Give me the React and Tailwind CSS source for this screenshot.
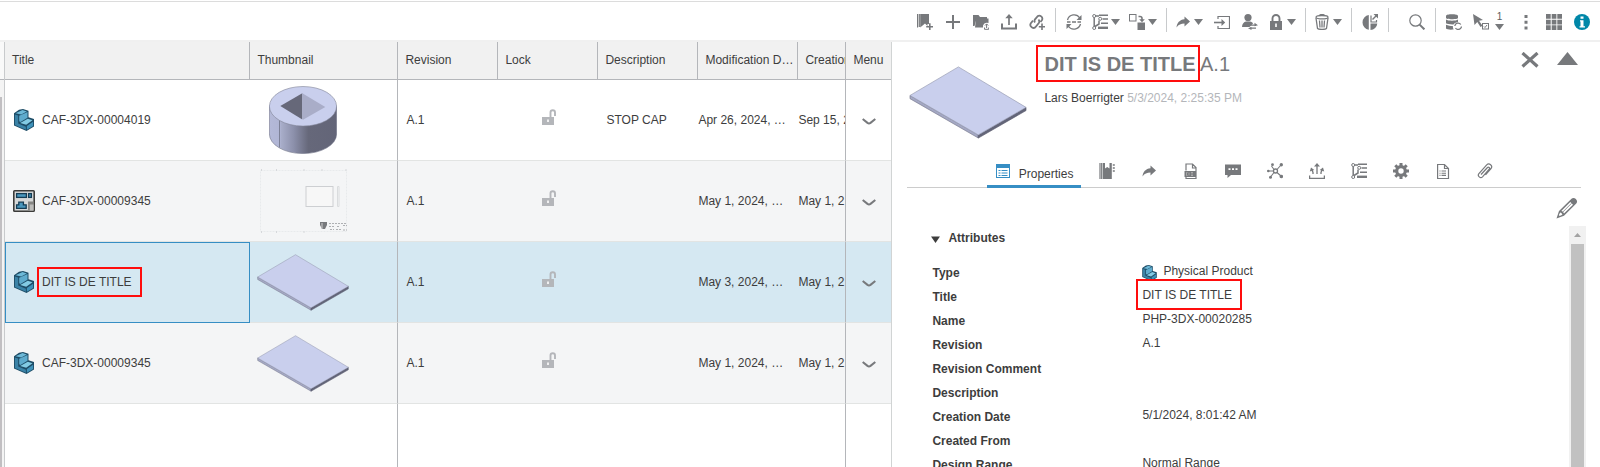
import React from "react";

const G = "#77797c";

function Svg({ children, className = "size-4", box = "0 0 16 16" }) {
  return (
    <svg viewBox={box} className={className} fill="none" stroke={G} aria-hidden="true">
      {children}
    </svg>
  );
}

/* ---------- toolbar icons ---------- */

const BookmarkAdd = () => (
  <Svg>
    <path d="M.5 0v13.500M2.300 0v13" strokeWidth="1.200" />
    <path d="M3.200 0H12v10h-1.500v2L8 9.500 3.200 13.500z" fill={G} stroke="none" />
    <path d="M12.800 9.300V16M9.200 12.800H16" strokeWidth="1.600" />
  </Svg>
);
const Plus = () => (
  <Svg>
    <path d="M8 1v14M1 8h14" strokeWidth="2" />
  </Svg>
);
const FolderUp = () => (
  <Svg>
    <path d="M0 1h5.500l1.500 2H14v2H3.500L1.500 12H0z" fill={G} stroke="none" />
    <path d="M3 4.500h12.500V9a4 4 0 0 0-5.500 4.500H2z" fill={G} stroke="none" />
    <path d="M11.500 13.500v1.800h4.200v-1.800M13.600 14v-4M12 11.500l1.600-1.600 1.600 1.600" strokeWidth="1" />
  </Svg>
);
const Upload = () => (
  <Svg>
    <path d="M1 9.500v5h14v-5" strokeWidth="2" />
    <path d="M8 11V2" strokeWidth="1.700" />
    <path d="M8 0l3.700 4.300H4.300z" fill={G} stroke="none" />
  </Svg>
);
const LinkAdd = () => (
  <Svg>
    <path d="M6 8.500a3 3 0 0 1 0-3.200l2.500-3a3 3 0 0 1 4.500 3.700l-1.500 2" strokeWidth="1.800" />
    <path d="M9.500 5.500a3 3 0 0 1 .3 3.500l-2.800 3.500a3 3 0 0 1-5-3.500l2-2.300" strokeWidth="1.800" />
    <path d="M13 9.500V16M9.800 12.800H16" strokeWidth="1.600" />
  </Svg>
);
const Refresh = () => (
  <Svg>
    <path d="M1.500 6A6.800 6.800 0 0 1 13.800 4M14.500 10A6.800 6.800 0 0 1 2.200 12" strokeWidth="1.300" />
    <path d="M15.500 1v5h-5zM.5 15v-5h5z" fill={G} stroke="none" />
    <path d="M1 8h3.500M6 8h4M11.500 8H15" strokeWidth="1.700" />
  </Svg>
);
const TreeList = () => (
  <Svg>
    <circle cx="2.200" cy="2" r="1.500" />
    <circle cx="2.200" cy="14" r="1.500" />
    <circle cx="8.200" cy="4.800" r="1.500" />
    <path d="M2.200 3.500v9M3 12.500l4-2.500V6.500M4 2h3" strokeWidth="1.500" />
    <path d="M7 1.300h9M10.500 5H16M9 9.300h7" strokeWidth="1.600" />
    <path d="M6 13.800h10" strokeWidth="2.400" />
  </Svg>
);
const CopyTo = () => (
  <Svg>
    <rect x=".5" y=".5" width="6.500" height="6.500" />
    <path d="M8.500 8.500H16V16H8.500z" fill={G} stroke="none" />
    <path d="M9.500 2.500h1.500a2 2 0 0 1 2 2V6" strokeWidth="1.600" />
    <path d="M10.200 5.200h5.600L13 8.300z" fill={G} stroke="none" />
  </Svg>
);
const Share = () => (
  <Svg>
    <path d="M9.500 2.500l5.500 5-5.500 5V9.500C6 9.500 3.500 10.500 1.500 13.500 2 9 4.500 5.800 9.500 5.300z" fill={G} stroke="none" />
  </Svg>
);
const Enter = () => (
  <Svg>
    <path d="M4 5V2.500h11.500v12H4V12" strokeWidth="1.200" />
    <path d="M0 8.500h9" strokeWidth="1.600" />
    <path d="M7.500 5l3.700 3.500L7.500 12z" fill={G} stroke="none" />
  </Svg>
);
const UserSwap = () => (
  <Svg>
    <circle cx="6" cy="3.600" r="3.600" fill={G} stroke="none" />
    <path d="M0 13c0-3.500 2-5 4-5.500h4c1.500.3 2.500 1 3 2L7.500 13z" fill={G} stroke="none" />
    <path d="M8 11.200h6M8 14.200h6" strokeWidth="1.300" />
    <path d="M12.500 8.800L16 11.200l-3.500 1zM9.500 13L6 14.200 9.500 16z" fill={G} stroke="none" />
  </Svg>
);
const Lock = () => (
  <Svg>
    <path d="M4.500 7V4.500a3.500 3.500 0 0 1 7 0V7" strokeWidth="1.900" />
    <path d="M2 7h12v9H2z" fill={G} stroke="none" />
    <path d="M8 9.500v3.500" stroke="#fff" strokeWidth="1.600" />
  </Svg>
);
const Trash = () => (
  <Svg>
    <ellipse cx="8" cy="3.200" rx="6" ry="1.700" strokeWidth="1.300" />
    <path d="M5.500 1.700c0-1.600 5-1.600 5 0" strokeWidth="1.200" />
    <path d="M2 4l1.500 10.500c1.500 1.200 7.500 1.200 9 0L14 4M5.500 6.500l.5 7M8 6.500v7M10.500 6.500l-.5 7" strokeWidth="1.300" />
  </Svg>
);
const PieOut = () => (
  <Svg>
    <path d="M6.800 1v14.800A7.500 7.500 0 0 1 6.800 1zM8.500 9.500h6.800A7 7 0 0 1 8.500 16z" fill={G} stroke="none" />
    <path d="M9 1.500V8h5.500V6" strokeWidth="1.200" />
    <path d="M10.500 5.500l4-4" strokeWidth="1.400" />
    <path d="M11.500 0H16v4.500z" fill={G} stroke="none" />
  </Svg>
);
const Search = () => (
  <Svg>
    <circle cx="6.500" cy="6.500" r="5.700" strokeWidth="1.200" />
    <path d="M10.600 10.600l4.800 4.800" strokeWidth="2" />
  </Svg>
);
const DbSync = () => (
  <Svg>
    <path d="M0 1.800C0-.3 12 -.3 12 1.800V4C12 5.600 0 5.600 0 4zM0 5.500c2 1.600 10 1.600 12 0V8c-2.500.3-4 1.500-4.500 2.500C4 10.600 1 10 0 9.300zM0 10.800c2 1 4.500 1.200 6.800 1.200 0 1.300.2 2.300.8 3.500C4 15.900 1 15.500 0 14.500z" fill={G} stroke="none" />
    <path d="M8.800 12a3.300 3.300 0 0 1 6-1.500M15.500 12.500a3.300 3.300 0 0 1-6 1.500" strokeWidth="1.300" />
  </Svg>
);
const PointerBox = () => (
  <Svg>
    <path d="M0 0l10 6-4 .8 3.500 5-2 1.200-3.200-5L1.500 11z" fill={G} stroke="none" />
    <rect x="9.500" y="9.500" width="6" height="5.500" />
    <path d="M11 12.500l1 1 2-2.500" />
  </Svg>
);
const Dots = () => (
  <Svg>
    <path d="M6.500 1h3v3h-3zM6.500 6.700h3v3h-3zM6.500 12.400h3v3h-3z" fill={G} stroke="none" />
  </Svg>
);
const GridIcon = () => (
  <Svg>
    <path d="M0 0h4.700v4.700H0zM5.700 0h4.700v4.700H5.700zM11.300 0H16v4.700h-4.700zM0 5.700h4.700v4.700H0zM5.700 5.700h4.700v4.700H5.700zM11.300 5.700H16v4.700h-4.700zM0 11.300h4.700V16H0zM5.700 11.300h4.700V16H5.700zM11.300 11.300H16V16h-4.700z" fill={G} stroke="none" />
  </Svg>
);
const Info = () => (
  <Svg>
    <circle cx="8" cy="8" r="8" fill="#0087a8" stroke="none" />
    <path d="M6.500 2.500h3v2.300h-3zM6 6.200h3.500v6H11v1.300H5.500v-1.300h1V7.500H6z" fill="#fff" stroke="none" />
  </Svg>
);
const Caret = () => (
  <svg viewBox="0 0 9 6" className="h-1.5 w-[9px]" aria-hidden="true">
    <path d="M0 0h9L4.500 6z" fill={G} />
  </svg>
);

/* ---------- tab icons ---------- */

const FormIcon = () => (
  <Svg className="size-3.5" box="0 0 14 14">
    <rect x=".5" y=".5" width="13" height="13" stroke="#368ec4" fill="#fff" />
    <path d="M0 0h14v4H0z" fill="#368ec4" stroke="none" />
    <path d="M2.500 6.500h2M5.500 6.500h6M2.500 9h2M5.500 9h6M2.500 11.500h2M5.500 11.500h6" stroke="#368ec4" />
  </Svg>
);
const Book = () => (
  <Svg>
    <path d="M1 0v16M2.700 0v16" strokeWidth="1.200" />
    <path d="M3.800 0H6v5.500L8.200 4l2.300 1.500V0h2.300v16h-9z" fill={G} stroke="none" />
    <path d="M13.800 2h2M13.800 5h2M13.800 8h2" strokeWidth="1.500" />
  </Svg>
);
const DocTag = () => (
  <Svg>
    <path d="M3 7.500V1h6.500L13 4.500v11H3v-1.500M9.500 1v4H13" strokeWidth="1.200" />
    <path d="M1.500 8H13v6H1.500z" fill={G} stroke="none" />
    <path d="M4.500 9.500H3.500v3h1M6 9.500v3M8 9.500h2M8 11h2M8 12.500h2" stroke="#bbb" strokeWidth=".7" />
  </Svg>
);
const Comment = () => (
  <Svg>
    <path d="M0 1.500h16V12H6l-3.500 3V12H0z" fill={G} stroke="none" />
    <path d="M3.500 6.200h2M7 6.200h2M10.500 6.200h2" stroke="#fff" strokeWidth="1.700" />
  </Svg>
);
const Network = () => (
  <Svg>
    <circle cx="8.500" cy="8" r="2" strokeWidth="1.300" />
    <path d="M7 6.500L4.500 3M10 6.500L14 2M10 9.500l4 3.500M7 9.500L3.500 14M6 8H2" strokeWidth="1.100" />
    <g fill={G} stroke="none">
      <circle cx="5.500" cy="1.700" r="1.400" />
      <circle cx="14.300" cy="1.700" r="1.700" />
      <circle cx="14.300" cy="13.500" r="1.800" />
      <circle cx="3.500" cy="14.300" r="1.500" />
      <circle cx="1.300" cy="8" r="1.300" />
    </g>
  </Svg>
);
const Export = () => (
  <Svg>
    <path d="M.6 12.500v2.800h14.800v-2.800M8 11V3M4 11V9.500L3 7M12 11V9.500L13 7" strokeWidth="1.300" />
    <path d="M8 0l3 3.500H5zM.8 8.500L2 4.500 5.300 7zM15.200 8.500L14 4.500 10.700 7z" fill={G} stroke="none" />
  </Svg>
);
const Gear = () => (
  <Svg>
    <circle cx="8" cy="8" r="4.300" strokeWidth="3.200" />
    <path d="M8 0v3M8 13v3M0 8h3M13 8h3M2.300 2.300l2.200 2.200M11.500 11.500l2.200 2.200M2.300 13.700l2.200-2.200M11.500 4.500l2.200-2.200" strokeWidth="3" />
  </Svg>
);
const DocLines = () => (
  <Svg>
    <path d="M2.600 1.500h6.900l4 4v10H2.600zM9.500 1.500v4h4" strokeWidth="1.200" />
    <path d="M4.500 8h1M6.500 8H11M4.500 10.200h1M6.500 10.200H11M4.500 12.400h1M6.500 12.400H11" strokeWidth="1.100" />
  </Svg>
);
const Clip = () => (
  <Svg>
    <path d="M4 11.500l6.500-7c1-1 2.800.3 1.700 1.700L5.500 13.800c-2 2-5.500-.8-3.600-3.200l7.800-8.700c2.500-2.500 6.500 1 4.300 3.600l-5.500 6.300" strokeWidth="1.200" />
  </Svg>
);

/* ---------- content drawings ---------- */

function PartIcon({ className = "h-[22px] w-5" }) {
  return (
    <svg viewBox="0 0 20 22" className={`${className} shrink-0`} aria-hidden="true">
      <path d="M0 4.200L5 .8 9 0l5.500 1.800v6.400L20 10v7.500L12.500 22 0 16.500z" fill="#1d4c66" />
      <path d="M1.500 4.300L8.500 1l4.300 1.500-5.600 3z" fill="#6db9d8" />
      <path d="M.9 5.400l3.300 1.200v7.900l7.700 3.300v3L.9 15.900z" fill="#3a82a6" />
      <path d="M5.200 6.800l8.300-3.900v5.800L6.500 13l-1.300-.7z" fill="#5eabcd" />
      <path d="M6.200 14l7.500-4.300 4.800 1.500-6.300 4.500z" fill="#83cbe4" />
      <path d="M12.900 17l6.200-4.300V17l-6.200 3.800z" fill="#3f92ba" />
    </svg>
  );
}
function DrawingIcon() {
  return (
    <svg viewBox="0 0 22 22" className="size-[22px] shrink-0" aria-hidden="true">
      <rect x=".8" y=".8" width="20.400" height="20.400" rx=".8" fill="#d6d8d8" stroke="#3b3b39" strokeWidth="1.600" />
      <rect x="3.600" y="3.600" width="9.800" height="3.800" fill="#4a97bd" stroke="#143c54" strokeWidth="1.300" />
      <rect x="15.600" y="3.600" width="2.800" height="3.800" fill="#4a97bd" stroke="#143c54" strokeWidth="1.300" />
      <path d="M3.600 18.400v-3.600h2.200v-2.600h4.600v2.600h2.800v3.600z" fill="#4a97bd" stroke="#143c54" strokeWidth="1.300" />
      <path d="M15 11.500h5.500v9H15z" fill="#858583" />
      <path d="M16.800 14.500h3.700v6h-3.700z" fill="#bcbcba" />
    </svg>
  );
}
function Plate({ className = "h-[57px] w-[92px]" }) {
  return (
    <svg viewBox="0 0 92 57" className={className} aria-hidden="true">
      <path d="M.7 23L54 53.800v2.400L.7 25.500z" fill="#a4a8c4" stroke="#77798c" strokeWidth=".5" />
      <path d="M91.300 32.300v2.500L54 56.300v-2.500z" fill="#636579" stroke="#55576a" strokeWidth=".5" />
      <path d="M38.500.7l52.800 31.600L54 53.800.7 23z" fill="#c9cfed" stroke="#9297ad" strokeWidth=".5" />
    </svg>
  );
}
function Ring() {
  return (
    <svg viewBox="0 0 68 68" className="ml-3 size-[68px]" aria-hidden="true">
      <defs>
        <linearGradient id="ringSide" x1="0" x2="1" y1="0" y2="0">
          <stop offset="0" stopColor="#b4b9d8" />
          <stop offset=".16" stopColor="#b0b5d4" />
          <stop offset=".17" stopColor="#a9aeca" />
          <stop offset=".36" stopColor="#8c90ab" />
          <stop offset=".58" stopColor="#66687a" />
          <stop offset="1" stopColor="#636578" />
        </linearGradient>
      </defs>
      <path d="M.4 20v28a33.600 19.600 0 0 0 67.200 0V20z" fill="url(#ringSide)" stroke="#6f7286" strokeWidth=".6" />
      <path d="M10.500 34v27.500" stroke="#6f7286" strokeWidth=".8" />
      <ellipse cx="34" cy="20.300" rx="33.600" ry="19.800" fill="#c9cfed" stroke="#7f8396" strokeWidth=".6" />
      <path d="M11.300 20L33.300 7.300V33.500z" fill="#666879" />
      <path d="M33.300 7.300l23 13.700L34 33.700z" fill="#a9adc8" />
    </svg>
  );
}
function Sheet() {
  return (
    <svg viewBox="0 0 90 64" className="ml-0.5 h-16 w-[90px]" fill="none" aria-hidden="true">
      <rect x="1.500" y="1.500" width="86" height="61" stroke="#e8eaec" strokeDasharray="2 1" />
      <path d="M2.500 0v2M17.500 0v2M45 0v2M63 0v2M87 0v2M2.500 62v2M17.500 62v2M45 62v2" stroke="#d6d8db" />
      <rect x="47" y="17.500" width="27" height="20" fill="#f7f7f7" stroke="#cdcfd2" />
      <path d="M78.500 17.500h1.500v20h-1.500z" stroke="#dadcde" />
      <path d="M61 53h7v3l-2 4h-3l-2-4z" fill="#77797c" />
      <path d="M63 54v6" stroke="#d0d0d0" />
      <path d="M70 54.500h8M79 54.500h8M70 57.500h5M78 57.500h3M84 56.500h4M71 60.500h4M77 60.500h6M84 61h4" stroke="#aeb0b3" strokeDasharray="2 1" />
    </svg>
  );
}
const OpenLock = () => (
  <svg viewBox="0 0 14 16" className="mb-1.5 ml-11 h-4 w-3.5" aria-label="Unlocked" role="img">
    <path d="M8.500 8V3.500a2.200 2.200 0 0 1 4.500 0V7" fill="none" stroke="#b4b6ba" strokeWidth="1.900" />
    <path d="M0 8h12v8H0z" fill="#b4b6ba" />
    <path d="M6 10.500v2.500" stroke="#fff" strokeWidth="1.600" />
  </svg>
);

/* ---------- toolbar ---------- */

function Tool({ label, icon: Icon, menu }) {
  return menu ? (
    <button type="button" aria-label={label} className="flex h-7 w-[37px] items-center gap-[3px] pl-1">
      <Icon />
      <Caret />
    </button>
  ) : (
    <button type="button" aria-label={label} className="flex size-7 items-center justify-center">
      <Icon />
    </button>
  );
}
const Divider = () => <span className="mx-1 mb-1 h-6 w-px bg-[#c8cacc]" />;

function Toolbar() {
  return (
    <header className="mt-px flex h-[41px] shrink-0 items-center justify-end border-t border-b-2 border-t-[#dcdcdc] border-b-[#f0f0f0] pt-0.5 pr-1">
      <Tool label="Add bookmark" icon={BookmarkAdd} />
      <Tool label="New" icon={Plus} />
      <Tool label="Open folder" icon={FolderUp} />
      <Tool label="Upload" icon={Upload} />
      <Tool label="Add link" icon={LinkAdd} />
      <Divider />
      <Tool label="Update" icon={Refresh} />
      <Tool label="Structure" icon={TreeList} menu />
      <Tool label="Duplicate" icon={CopyTo} menu />
      <Divider />
      <Tool label="Share" icon={Share} menu />
      <Tool label="Open" icon={Enter} />
      <Tool label="Change owner" icon={UserSwap} />
      <Tool label="Lock" icon={Lock} menu />
      <Divider />
      <Tool label="Delete" icon={Trash} menu />
      <Divider />
      <Tool label="Explore" icon={PieOut} />
      <Divider />
      <span className="w-2.5" />
      <Tool label="Search" icon={Search} />
      <Divider />
      <Tool label="Synchronize" icon={DbSync} />
      <button type="button" aria-label="Selection" className="flex h-7 items-center gap-1.5 pr-2 pl-[5px]">
        <PointerBox />
        <span className="flex flex-col items-center pb-1 text-[10px] leading-[14px] text-[#5b5d5e]">
          1
          <Caret />
        </span>
      </button>
      <Tool label="More" icon={Dots} />
      <Tool label="Views" icon={GridIcon} />
      <Tool label="Information" icon={Info} />
    </header>
  );
}

/* ---------- table ---------- */

const rows = [
  { title: "CAF-3DX-00004019", icon: PartIcon, thumb: Ring, desc: "STOP CAP", mod: "Apr 26, 2024, …", created: "Sep 15, 2", bg: "bg-white" },
  { title: "CAF-3DX-00009345", icon: DrawingIcon, thumb: Sheet, desc: "", mod: "May 1, 2024, …", created: "May 1, 2", bg: "bg-[#f4f5f6]" },
  { title: "DIT IS DE TITLE", icon: PartIcon, thumb: Plate, desc: "", mod: "May 3, 2024, …", created: "May 1, 2", bg: "bg-[#d5e8f2]", selected: true },
  { title: "CAF-3DX-00009345", icon: PartIcon, thumb: Plate, desc: "", mod: "May 1, 2024, …", created: "May 1, 2", bg: "bg-[#f4f5f6]" },
];

const th = "h-[38px] overflow-hidden border-r border-b border-[#b4b6ba] bg-[#f1f1f1] pl-[7px] pb-0.5 text-left font-normal whitespace-nowrap";
const td = "border-b border-b-[#e2e4e3]";

function ResultsTable() {
  return (
    <table className="h-full w-full table-fixed border-separate border-spacing-0">
      <colgroup>
        <col />
        <col className="w-[148px]" />
        <col className="w-[100px]" />
        <col className="w-[100px]" />
        <col className="w-[100px]" />
        <col className="w-[100px]" />
        <col className="w-[48px]" />
        <col className="w-[45px]" />
      </colgroup>
      <thead>
        <tr>
          <th className={th}>Title</th>
          <th className={th}>Thumbnail</th>
          <th className={th}>Revision</th>
          <th className={th}>Lock</th>
          <th className={th}>Description</th>
          <th className={th}>Modification D…</th>
          <th className={th}>Creation</th>
          <th className={`${th} border-r-0`}>Menu</th>
        </tr>
      </thead>
      <tbody>
        {rows.map((r, i) => {
          const Icon = r.icon;
          const Thumb = r.thumb;
          return (
            <tr key={i} className={`h-[81px] ${r.bg}`}>
              <td className={`${td} ${r.selected ? "outline-1 -outline-offset-1 outline-[#368ec4]" : ""}`}>
                <div className="flex items-center pl-2">
                  <span className="flex w-[22px] justify-center">
                    <Icon />
                  </span>
                  <span className="relative ml-[7px]">
                    {r.title}
                    {r.selected && <span className="absolute -top-[7px] -right-2.5 -bottom-[7px] -left-[5px] border-2 border-[#ff0d0d]" />}
                  </span>
                </div>
              </td>
              <td className={`${td} border-r border-r-[#b4b6ba] pl-[7px]`}>
                <Thumb />
              </td>
              <td className={`${td} pl-2`}>A.1</td>
              <td className={td}>
                <OpenLock />
              </td>
              <td className={`${td} pl-2`}>{r.desc}</td>
              <td className={`${td} overflow-hidden whitespace-nowrap`}>{r.mod}</td>
              <td className={`${td} overflow-hidden border-r border-r-[#b4b6ba] whitespace-nowrap`}>{r.created}</td>
              <td className={td}>
                <button type="button" aria-label="Row menu" className="ml-4 flex h-5 w-3.5 items-center pt-0.5">
                  <svg viewBox="0 0 14 7" className="h-[7px] w-3.5" aria-hidden="true">
                    <path d="M.7 1L5.500 4.900Q7 6 8.500 4.900L13.300 1" fill="none" stroke={G} strokeWidth="2" />
                  </svg>
                </button>
              </td>
            </tr>
          );
        })}
        <tr aria-hidden="true">
          <td />
          <td className="border-r border-[#b4b6ba]" />
          <td colSpan={4} />
          <td className="border-r border-[#b4b6ba]" />
          <td />
        </tr>
      </tbody>
    </table>
  );
}

/* ---------- detail panel ---------- */

const tabs = [
  ["Content", Book],
  ["Share", Share],
  ["Attributes file", DocTag],
  ["Comments", Comment],
  ["Relations", Network],
  ["Export", Export],
  ["Structure", TreeList],
  ["Settings", Gear],
  ["Specification", DocLines],
  ["Attachments", Clip],
];

const attributes = [
  ["Type", "Physical Product"],
  ["Title", "DIT IS DE TITLE"],
  ["Name", "PHP-3DX-00020285"],
  ["Revision", "A.1"],
  ["Revision Comment", ""],
  ["Description", ""],
  ["Creation Date", "5/1/2024, 8:01:42 AM"],
  ["Created From", ""],
  ["Design Range", "Normal Range"],
];

function Details() {
  return (
    <section className="flex min-w-0 flex-[708_1_0%] flex-col">
      <div className="mr-[19px] ml-[15px] flex h-[118px] shrink-0">
        <Plate className="mt-6 ml-0.5 h-[73px] w-[118px] shrink-0" />
        <div className="flex-1 pt-2.5 pl-[17px]">
          <h1 className="text-[20px] leading-6 whitespace-nowrap text-[#77797c]">
            <span className="relative inline-block font-bold">
              DIT IS DE TITLE
              <span className="absolute -top-[7px] -right-1 -bottom-1.5 -left-2 border-2 border-[#ff0d0d]" />
            </span>{" "}
            A.1
          </h1>
          <p className="mt-3.5">
            Lars Boerrigter <span className="text-[#b4b6ba]">5/3/2024, 2:25:35 PM</span>
          </p>
        </div>
        <div className="flex items-start gap-[18px] pt-2.5 pr-[3px]">
          <button type="button" aria-label="Close">
            <Svg className="h-4 w-[18px]" box="0 0 18 16">
              <path d="M1.500 1l15 13.500M16.500 1l-15 13.500" strokeWidth="3.200" />
            </Svg>
          </button>
          <button type="button" aria-label="Collapse">
            <Svg className="h-4 w-[21px]" box="0 0 21 16">
              <path d="M10.500 0L21 13H0z" fill={G} stroke="none" />
            </Svg>
          </button>
        </div>
      </div>

      <nav className="mr-[19px] ml-[15px] flex h-7 shrink-0 justify-center border-b border-[#ccc] pl-1">
        <button type="button" className="-mb-px mr-[5px] flex h-7 w-[94px] items-start gap-[9px] border-b-[3px] border-[#368ec4] pl-[9px]">
          <span className="pt-1">
            <FormIcon />
          </span>
          <span className="pt-1.5">Properties</span>
        </button>
        {tabs.map(([label, Icon]) => (
          <button key={label} type="button" aria-label={label} className="flex w-[42px] justify-center pt-[3px]">
            <Icon />
          </button>
        ))}
      </nav>

      <div className="flex h-[38px] shrink-0 justify-end pt-[9px] pr-[22px]">
        <button type="button" aria-label="Edit" className="size-[22px]">
          <Svg className="size-[22px]" box="0 0 22 22">
            <path d="M.5 21.500L3 14 15.500 1.800C18-.8 23 3.500 20.300 6.500L8 18.800z" fill={G} stroke="none" />
            <path d="M5.300 13.900l9-8.900 2.700 2.700-9 8.900c-.3-1.400-1.400-2.500-2.700-2.700z" fill="#fff" stroke="none" />
            <path d="M4.200 15.500c1 .2 2 1.200 2.200 2.200l-2.800 1.200-.8-.8z" fill="#fff" stroke="none" />
            <path d="M6.500 15.300l9-9" strokeWidth=".8" />
          </Svg>
        </button>
      </div>

      <div className="flex min-h-0 flex-1 pr-3.5">
        <div className="min-w-0 flex-1 overflow-hidden pl-10">
          <button type="button" aria-expanded="true" className="-ml-px flex h-6 items-center gap-2 font-bold">
            <svg viewBox="0 0 9 7" className="mt-0.5 h-[7px] w-[9px]" aria-hidden="true">
              <path d="M0 .5h9L4.500 7z" fill="#3d3d3d" />
            </svg>
            Attributes
          </button>
          <dl className="mt-[11px]">
            {attributes.map(([label, value]) => (
              <div key={label} className="flex h-6">
                <dt className="w-[210px] pt-1 font-bold">{label}</dt>
                <dd className="flex items-start pt-0.5">
                  {label === "Type" && <PartIcon className="mt-0.5 mr-1.5 h-4 w-[15px]" />}
                  <span className="relative">
                    {value}
                    {label === "Title" && <span className="absolute -top-2 -right-2.5 -bottom-[7px] -left-1.5 border-2 border-[#ff0d0d]" />}
                  </span>
                </dd>
              </div>
            ))}
          </dl>
        </div>
        <div className="flex w-[17px] flex-col items-center bg-[#f1f1f1]">
          <svg viewBox="0 0 7 4" className="my-[7px] h-1 w-[7px] shrink-0" aria-hidden="true">
            <path d="M0 4h7L3.500 0z" fill="#a3a3a3" />
          </svg>
          <div className="w-[13px] flex-1 bg-[#c1c1c1]" />
        </div>
      </div>
    </section>
  );
}

export default function App() {
  return (
    <div className="flex h-screen flex-col overflow-hidden bg-white font-['Liberation_Sans',Arial,sans-serif] text-xs text-[#3d3d3d]">
      <Toolbar />
      <main className="flex min-h-0 flex-1">
        <div className="flex min-w-0 flex-[892_1_0%] border-r border-[#d1d4d4]">
          <div className="flex w-[5px] shrink-0 flex-col border-r border-[#c8cacc] bg-[#f4f4f4]">
            <div className="h-[38px] border-b border-[#b4b6ba] bg-[#f9f9f9]" />
            <div className="h-[17px]" />
            <div className="w-0.5 flex-1 bg-[#c1bfc2]" />
          </div>
          <div className="min-w-0 flex-1">
            <ResultsTable />
          </div>
        </div>
        <Details />
      </main>
    </div>
  );
}
